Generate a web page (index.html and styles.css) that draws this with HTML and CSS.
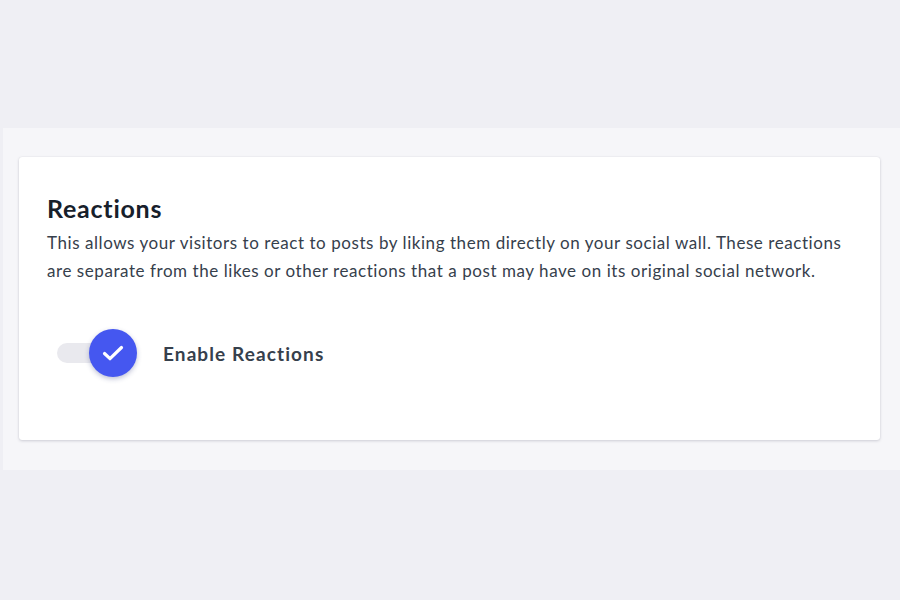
FILE: index.html
```html
<!DOCTYPE html>
<html lang="en">
<head>
  <meta charset="UTF-8">
  <meta name="viewport" content="width=device-width, initial-scale=1.0">
  <title>Reactions</title>
  <link rel="stylesheet" href="styles.css">
</head>
<body>
  <main class="band">
    <section class="card">
      <h2 class="card-title">Reactions</h2>
      <p class="card-text">This allows your visitors to react to posts by liking them directly on your social wall. These reactions are separate from the likes or other reactions that a post may have on its original social network.</p>
      <label class="toggle-row">
        <span class="toggle">
          <span class="toggle-track"></span>
          <span class="toggle-knob">
            <svg width="26" height="26" viewBox="0 0 26 26" fill="none" stroke="#fff" stroke-width="3.2" stroke-linecap="round" stroke-linejoin="round"><path d="M4.5 13.5l5.5 5.2L21.5 7.5"/></svg>
          </span>
        </span>
        <span class="toggle-label">Enable Reactions</span>
      </label>
    </section>
  </main>
</body>
</html>
```

FILE: styles.css
```css
:root {
  --page-bg: #efeff4;
  --band-bg: #f6f6f9;
  --title: #17202b;
  --text: #36404c;
  --accent: #4557f0;
}
body {
  margin: 0;
  background-color: var(--page-bg);
  font-family: Lato, "Noto Sans", sans-serif;
  padding-top: 128px;
}
.band {
  margin-left: 3px;
  background-color: var(--band-bg);
  padding: 29px 20px 30px 16px;
}
.card {
  background: #fff;
  border-radius: 3px;
  box-shadow: 0 1px 3px rgba(30, 30, 60, 0.18), 0 0 1px rgba(30, 30, 60, 0.12);
  padding: 36px 28px 63px;
}
.card-title {
  margin: 0;
  font-size: 25px;
  line-height: 30px;
  font-weight: 700;
  letter-spacing: 0.75px;
  color: var(--title);
}
.card-text {
  margin: 6px 0 0;
  font-size: 17px;
  line-height: 28px;
  letter-spacing: 0.56px;
  color: var(--text);
}
.toggle-row {
  margin-top: 44px;
  display: flex;
  align-items: center;
  gap: 26px;
}
.toggle {
  position: relative;
  width: 90px;
  height: 48px;
  display: block;
}
.toggle-track {
  position: absolute;
  left: 10px;
  top: 14px;
  width: 66px;
  height: 20px;
  border-radius: 10px;
  background: #e9e9ee;
}
.toggle-knob {
  position: absolute;
  left: 42px;
  top: 0;
  width: 48px;
  height: 48px;
  border-radius: 50%;
  background: var(--accent);
  box-shadow: 0 2px 5px rgba(40, 50, 120, 0.3);
  display: flex;
  align-items: center;
  justify-content: center;
}
.toggle-label {
  font-size: 19px;
  font-weight: 700;
  letter-spacing: 1.1px;
  color: var(--text);
}
```
